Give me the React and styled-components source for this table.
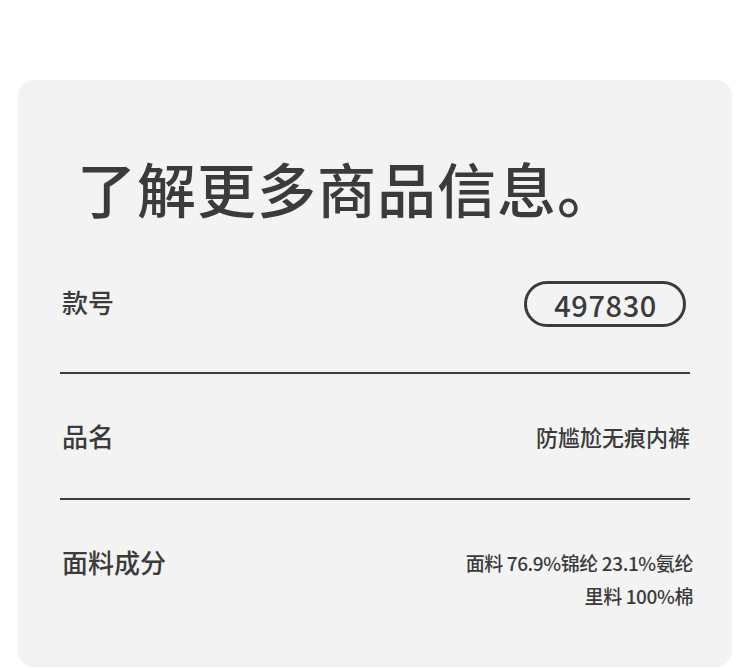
import React from "react";
import styled, { createGlobalStyle } from "styled-components";

const Global = createGlobalStyle`
  html, body { margin: 0; padding: 0; background: #ffffff; }
  body { font-family: "Noto Sans CJK SC", "Noto Sans", sans-serif; color: #3b3b3b; }
  * { box-sizing: border-box; }
`;

const Page = styled.div`
  padding: 80px 18px 0 18px;
  width: 750px;
`;

const Card = styled.section`
  width: 714px;
  height: 587px;
  background: #f3f3f3;
  border-radius: 16px;
  padding: 72px 42px 0;
`;

const Title = styled.h1`
  margin: 0 0 14px 17px;
  font-size: 59px;
  line-height: 72px;
  font-weight: 500;
  letter-spacing: 1px;
  color: #3b3b3b;
`;

const Row = styled.div`
  display: flex;
  justify-content: space-between;
  align-items: ${(p) => (p.$center ? "center" : "flex-start")};
  padding: ${(p) => p.$pad || "43px 0 43px"};
  border-bottom: ${(p) => (p.$last ? "none" : "2px solid #3d3d3d")};
`;

const Label = styled.div`
  font-size: 26px;
  line-height: 38px;
  font-weight: 500;
  padding-left: 2px;
  margin-top: ${(p) => p.$mt || "0"};
`;

const Pill = styled.div`
  height: 46px;
  padding: 0 26px 0 27px;
  margin-right: 4px;
  border: 3px solid #3b3b3b;
  border-radius: 23px;
  display: flex;
  align-items: center;
  font-size: 29px;
  font-weight: 500;
  letter-spacing: 0.6px;
`;

const Value = styled.div`
  font-size: ${(p) => p.$size || "20px"};
  line-height: ${(p) => p.$lh || "38px"};
  padding-top: ${(p) => p.$pt || "0"};
  margin-right: ${(p) => p.$mr || "0"};
  letter-spacing: ${(p) => p.$ls || "0"};
  text-align: right;
  font-weight: 500;
`;

export default function App() {
  return (
    <>
      <Global />
      <Page>
        <Card>
          <Title>了解更多商品信息。</Title>
          <Row $center $pad="43px 0 45px">
            <Label $mt="-4px">款号</Label>
            <Pill>497830</Pill>
          </Row>
          <Row>
            <Label>品名</Label>
            <Value $size="22px">防尴尬无痕内裤</Value>
          </Row>
          <Row $last>
            <Label>面料成分</Label>
            <Value $size="19px" $lh="33px" $pt="3px" $mr="-3px" $ls="-0.4px">
              面料 76.9%锦纶 23.1%氨纶
              <br />
              里料 100%棉
            </Value>
          </Row>
        </Card>
      </Page>
    </>
  );
}
